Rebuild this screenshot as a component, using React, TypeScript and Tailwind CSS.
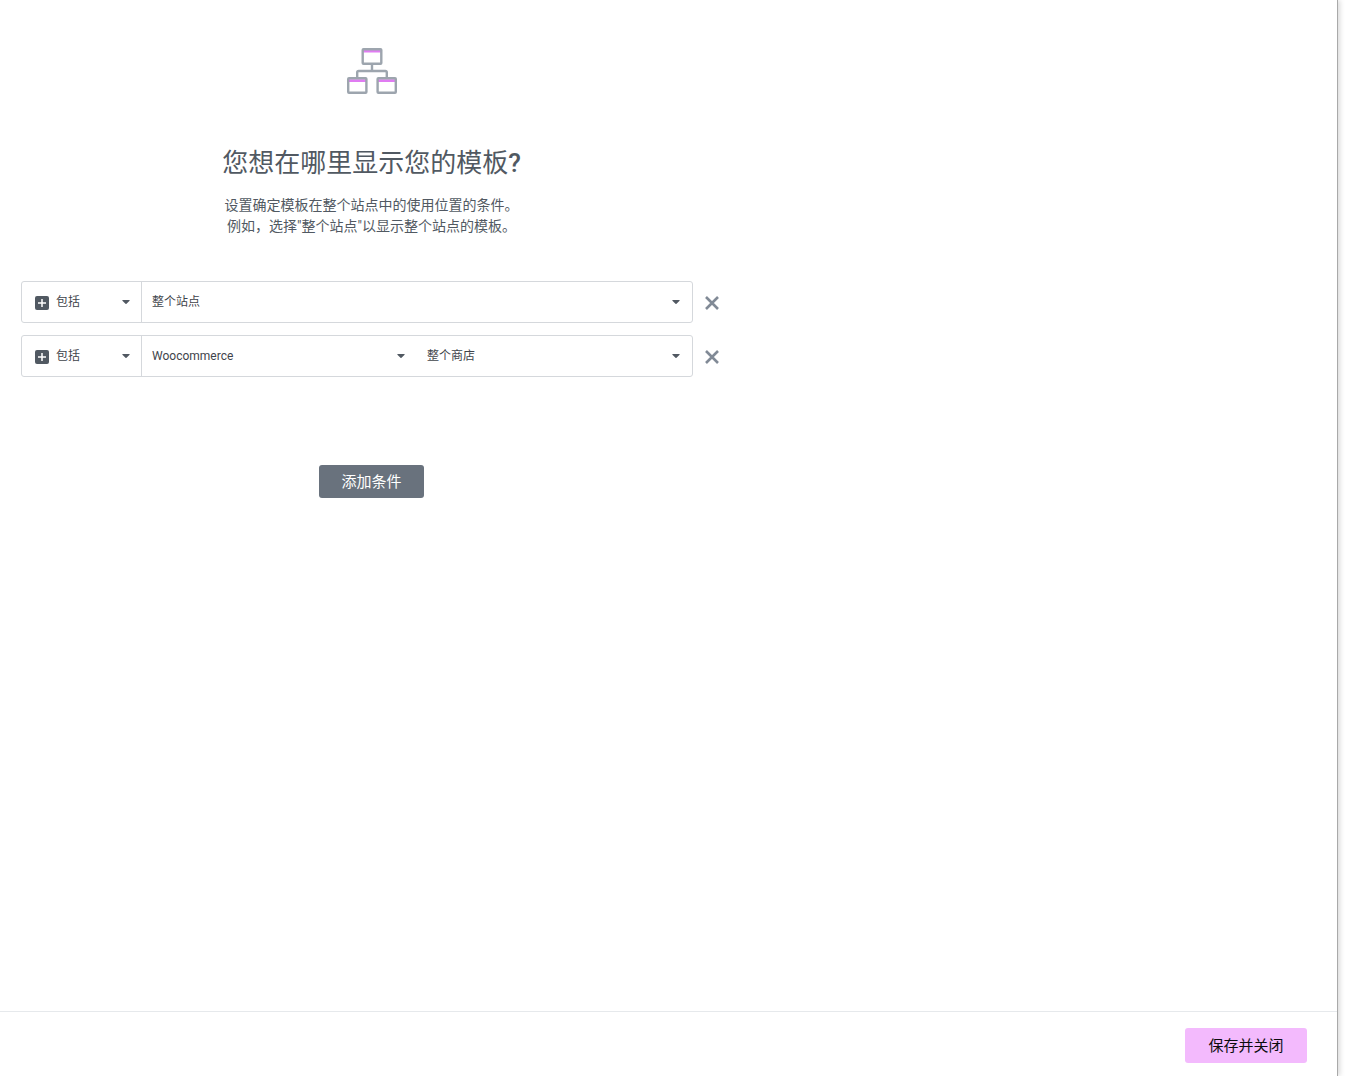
import { useState } from 'react';

type Condition = {
  id: number;
  type: string;
  name: string;
  sub?: string;
};

const initialConditions: Condition[] = [
  { id: 1, type: '包括', name: '整个站点' },
  { id: 2, type: '包括', name: 'Woocommerce', sub: '整个商店' },
];

function SitemapIcon() {
  return (
    <svg width="50" height="46" viewBox="0 0 50 46" fill="none" aria-hidden="true">
      <path d="M16 3.200h18M2 32.700h17M31 32.700h17" stroke="#e07cf2" strokeWidth="2.800" />
      <g stroke="#9da5ae" strokeWidth="2.400">
        <rect x="15.700" y="1.200" width="18.600" height="14.600" rx="0.800" />
        <rect x="1.200" y="30.200" width="18.200" height="14.600" rx="0.800" />
        <rect x="30.600" y="30.200" width="18.200" height="14.600" rx="0.800" />
        <path d="M25 16v7M10.200 30v-5.500a1.500 1.500 0 0 1 1.500-1.500h26.600a1.500 1.500 0 0 1 1.500 1.500V30" />
      </g>
    </svg>
  );
}

function PlusIcon() {
  return (
    <svg className="mt-0.5 shrink-0" width="14" height="14" viewBox="0 0 14 14" aria-hidden="true">
      <rect width="14" height="14" rx="2" fill="#515962" />
      <path d="M7 3v8M3 7h8" stroke="#fff" strokeWidth="1.500" />
    </svg>
  );
}

function Select({ label, value, options }: { label: string; value: string; options: string[] }) {
  return (
    <div className="relative h-full min-w-0 flex-1">
      <select
        aria-label={label}
        defaultValue={value}
        className="h-full w-full appearance-none bg-transparent pr-7 pl-2.5 text-xs text-[#3f444b] outline-none"
      >
        {options.map((option) => (
          <option key={option}>{option}</option>
        ))}
      </select>
      <svg
        className="pointer-events-none absolute top-1/2 right-3 -mt-0.5"
        width="8"
        height="4"
        viewBox="0 0 8 4"
        aria-hidden="true"
      >
        <path d="M0.800 0h6.400c.5 0 .7.500.4.800L4.500 3.800a.7.700 0 0 1-1 0L.4.800C.1.500.3 0 .8 0z" fill="#515962" />
      </svg>
    </div>
  );
}

function ConditionRow({ condition, onRemove }: { condition: Condition; onRemove: () => void }) {
  return (
    <div className="flex items-center">
      <div className="flex h-[42px] flex-1 rounded-[3px] border border-[#d5d8dc]">
        <div className="flex w-[120px] items-center border-r border-[#d5d8dc] pl-[13px]">
          <PlusIcon />
          <div className="-mr-px -ml-[3px] h-full flex-1">
            <Select label="类型" value={condition.type} options={['包括', '排除']} />
          </div>
        </div>
        <Select label="条件" value={condition.name} options={['整个站点', 'Woocommerce']} />
        {condition.sub && <Select label="子条件" value={condition.sub} options={[condition.sub]} />}
      </div>
      <button type="button" aria-label="删除" onClick={onRemove} className="ml-3 pt-0.5">
        <svg width="14" height="14" viewBox="0 0 14 14" aria-hidden="true">
          <path d="M1 1l12 12M13 1L1 13" stroke="#818a96" strokeWidth="2.600" />
        </svg>
      </button>
    </div>
  );
}

export default function App() {
  const [conditions, setConditions] = useState(initialConditions);

  const addCondition = () =>
    setConditions([...conditions, { id: Date.now(), type: '包括', name: '整个站点' }]);

  return (
    <div className="min-h-screen bg-white pr-[22px] font-[Roboto,'Noto_Sans_CJK_SC',sans-serif] text-[#515962]">
      <div className="flex min-h-screen flex-col border-r border-[#a9a9a9] shadow-[2px_0_5px_rgba(0,0,0,0.15)]">
        <main className="flex w-full max-w-[743px] flex-1 flex-col items-center pt-12">
          <SitemapIcon />
          <h1 className="mt-[49px] text-[26px] leading-10">
            您想在哪里显示您的模板<span className="font-medium">?</span>
          </h1>
          <p className="mt-3 text-center text-sm leading-[21px]">
            设置确定模板在整个站点中的使用位置的条件。
            <br />
            例如，选择"整个站点"以显示整个站点的模板。
          </p>

          <div className="mt-11 flex w-full flex-col gap-3 pr-6 pl-[21px]">
            {conditions.map((condition) => (
              <ConditionRow
                key={condition.id}
                condition={condition}
                onRemove={() => setConditions(conditions.filter((c) => c.id !== condition.id))}
              />
            ))}
          </div>

          <button
            type="button"
            onClick={addCondition}
            className="mt-22 h-[33px] rounded-[3px] bg-[#69727d] px-[22px] pt-0.5 text-[15px] text-white"
          >
            添加条件
          </button>
        </main>

        <footer className="flex h-[65px] justify-end border-t border-[#e6e9ec] pt-4 pr-[30px]">
          <button
            type="button"
            className="h-[35px] w-[122px] rounded-[3px] bg-[#f3bafd] pt-0.5 text-[15px] text-[#0c0d0e]"
          >
            保存并关闭
          </button>
        </footer>
      </div>
    </div>
  );
}
